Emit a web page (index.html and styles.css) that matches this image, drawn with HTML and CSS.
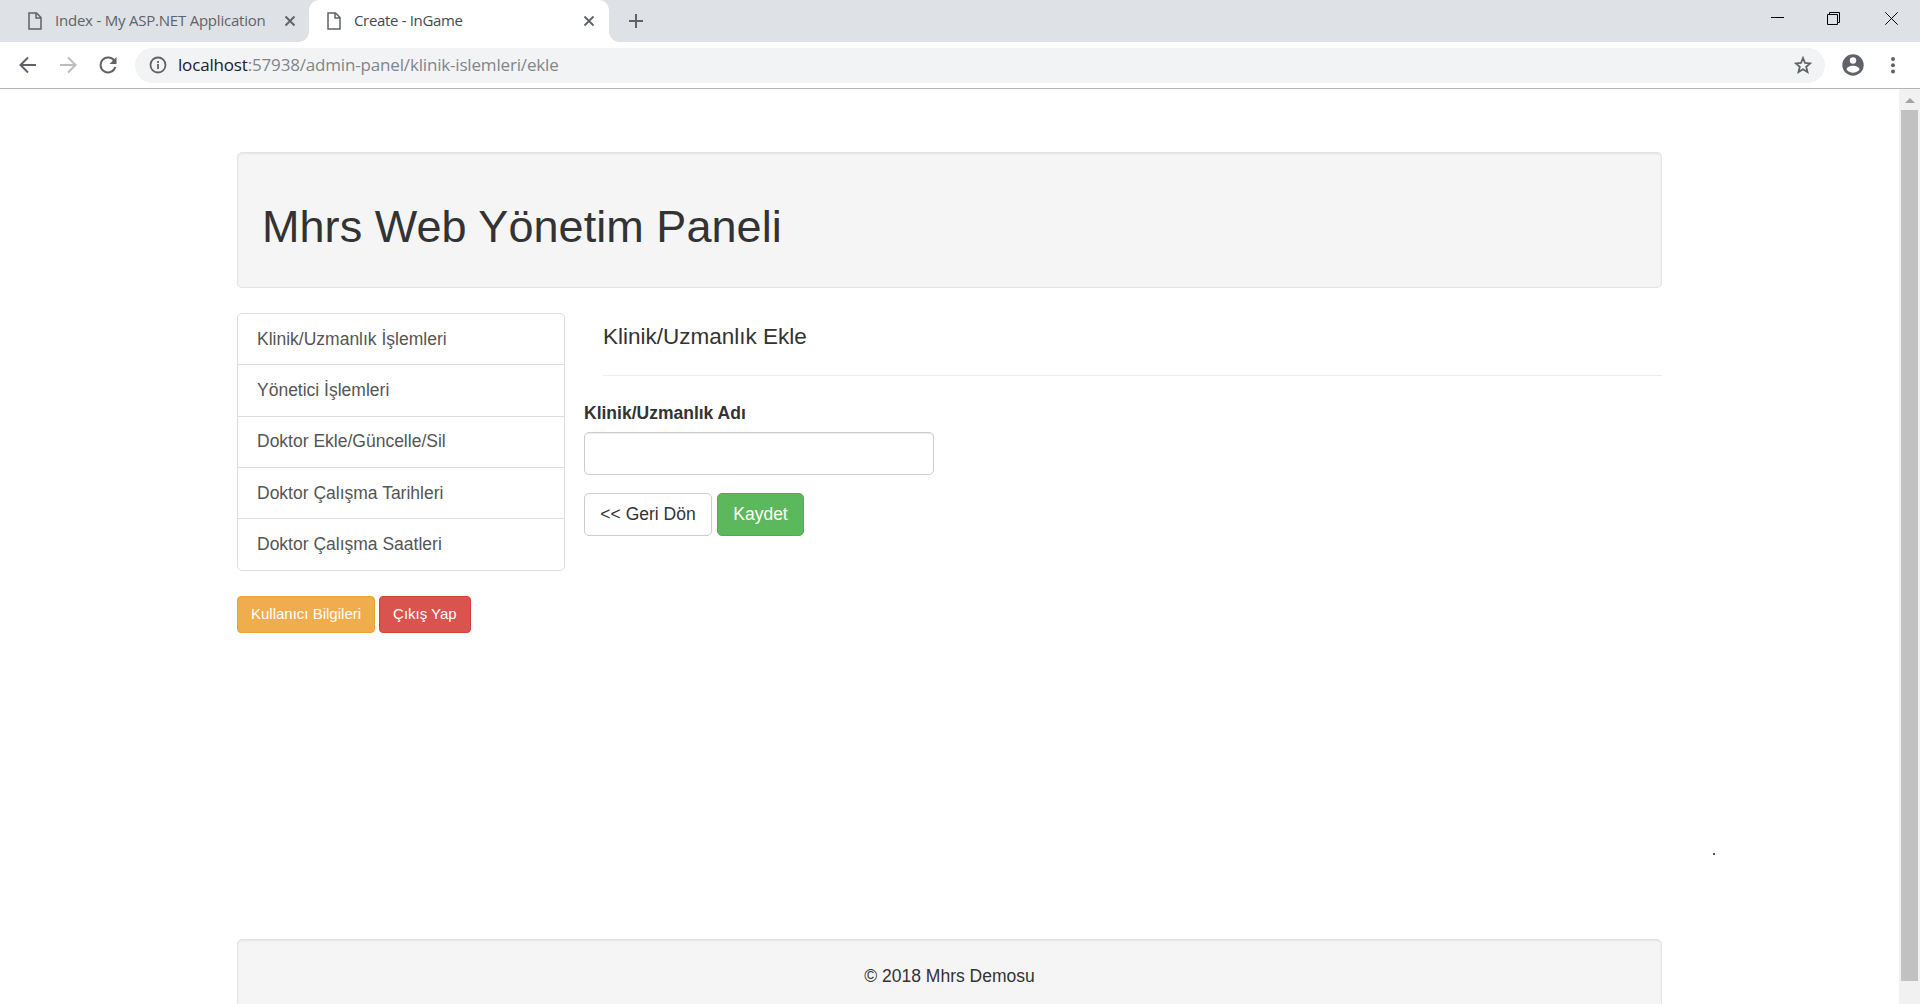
FILE: index.html
```html
<!DOCTYPE html>
<html lang="tr">
<head>
<meta charset="utf-8">
<title>Create - InGame</title>
<link rel="stylesheet" href="styles.css">
</head>
<body>
<div class="window">
  <header class="tabs">
    <div class="tab">
      <svg class="page-icon" width="14" height="18" viewBox="0 0 14 18"><path d="M1 1h7.500l4.500 4.500V17H1zM8 1v5h5"/></svg>
      <span class="tab-title title-index">Index - My ASP.NET Application</span>
      <svg class="tab-close" width="12" height="12" viewBox="0 0 12 12"><path d="M1.500 1.500l9 9M10.500 1.500l-9 9"/></svg>
    </div>
    <div class="tab active">
      <svg class="page-icon" width="14" height="18" viewBox="0 0 14 18"><path d="M1 1h7.500l4.500 4.500V17H1zM8 1v5h5"/></svg>
      <span class="tab-title title-create">Create - InGame</span>
      <svg class="tab-close" width="12" height="12" viewBox="0 0 12 12"><path d="M1.500 1.500l9 9M10.500 1.500l-9 9"/></svg>
    </div>
    <svg class="new-tab" width="16" height="16" viewBox="0 0 16 16"><path d="M8 1v14M1 8h14"/></svg>
    <div class="controls">
      <svg width="13" height="13" viewBox="0 0 13 13"><path d="M0 5.500h13"/></svg>
      <svg class="restore" width="13" height="13" viewBox="0 0 13 13"><path d="M.5 2.500h10v10h-10zM2.500 2.500v-2h10v10h-2"/></svg>
      <svg width="13" height="13" viewBox="0 0 13 13"><path d="M.3.3l12.400 12.400M12.700.3L.3 12.700"/></svg>
    </div>
  </header>
  <nav class="toolbar">
    <svg class="nav-icon" width="18" height="18" viewBox="0 0 18 18"><path d="M17 9H2M9 1.500L1.500 9 9 16.500"/></svg>
    <svg class="nav-icon disabled" width="18" height="18" viewBox="0 0 18 18"><path d="M1 9h15M9 1.500L16.500 9 9 16.500"/></svg>
    <svg class="nav-icon" width="18" height="18" viewBox="0 0 18 18"><path d="M15.600 5.200A7.500 7.500 0 1 0 16.300 11"/><path class="solid" d="M17.500 1v7h-7z"/></svg>
    <div class="address">
      <svg class="info" width="18" height="18" viewBox="0 0 18 18"><circle cx="9" cy="9" r="7.500"/><path d="M9 8v5M9 5v2"/></svg>
      <span class="url"><b>localhost</b>:57938/admin-panel/klinik-islemleri/ekle</span>
      <svg class="star" width="18" height="18" viewBox="0 0 18 18"><path d="M9 2l2 5 5.200.4-4 3.400 1.300 5.200L9 13.200 4.500 16l1.300-5.200-4-3.400L7 7z"/></svg>
    </div>
    <svg class="avatar" width="22" height="22" viewBox="0 0 22 22"><circle cx="11" cy="11" r="10.700"/><circle class="cut" cx="11" cy="6.500" r="3.200"/><path class="cut" d="M4.500 15.500c1-5 12-5 13 0-3 4.200-10 4.200-13 0z"/></svg>
    <svg class="dots" width="4" height="18" viewBox="0 0 4 18"><circle cx="2" cy="3" r="2"/><circle cx="2" cy="9.200" r="2"/><circle cx="2" cy="15.400" r="2"/></svg>
  </nav>
  <div class="viewport">
    <main class="container">
      <div class="well banner"><h1>Mhrs Web Yönetim Paneli</h1></div>
      <div class="columns">
        <aside>
          <ul class="list">
            <li>Klinik/Uzmanlık İşlemleri</li>
            <li>Yönetici İşlemleri</li>
            <li>Doktor Ekle/Güncelle/Sil</li>
            <li>Doktor Çalışma Tarihleri</li>
            <li>Doktor Çalışma Saatleri</li>
          </ul>
          <div class="actions small">
            <button class="btn warning">Kullanıcı Bilgileri</button>
            <button class="btn danger">Çıkış Yap</button>
          </div>
        </aside>
        <section>
          <h4>Klinik/Uzmanlık Ekle</h4>
          <label for="name">Klinik/Uzmanlık Adı</label>
          <input id="name" type="text">
          <div class="actions">
            <button class="btn plain">&lt;&lt; Geri Dön</button>
            <button class="btn success">Kaydet</button>
          </div>
        </section>
      </div>
      <footer class="well footer">© 2018 Mhrs Demosu</footer>
    </main>
    <div class="scrollbar">
      <svg width="10" height="5" viewBox="0 0 10 5"><path d="M0 5l5-5 5 5z"/></svg>
      <div class="thumb"></div>
    </div>
    <i class="speck"></i>
  </div>
</div>
</body>
</html>
```
FILE: styles.css
```css
* { box-sizing: border-box; }
html, body { margin: 0; height: 100%; overflow: hidden; background: #fff; }
body { font: 17.5px/25px "Liberation Sans", Arial, sans-serif; color: #333; }
svg { display: block; flex: none; fill: none; stroke: #5f6368; }
.window { width: 1920px; height: 1004px; display: flex; flex-direction: column; }
.tabs { height: 42px; flex: none; display: flex; background: #dee1e6; }
.tab { width: 309px; display: flex; align-items: center; padding: 0 13px 0 28px; font: 15px/20px "Open Sans", "Noto Sans", sans-serif; color: #5f6368; }
.tab.active { position: relative; width: 300px; padding: 0 14px 0 18px; background: #fff; border-radius: 10px 10px 0 0; color: #45494d; }
.tab.active::before, .tab.active::after { content: ""; position: absolute; bottom: 0; width: 10px; height: 10px; }
.tab.active::before { left: -10px; background: radial-gradient(circle at 0 0, transparent 9.500px, #fff 10px); }
.tab.active::after { right: -10px; background: radial-gradient(circle at 100% 0, transparent 9.500px, #fff 10px); }
.page-icon { stroke-width: 1.500; }
.tab-title { flex: 1; margin-left: 13px; padding-bottom: 2px; white-space: nowrap; }
.title-index { letter-spacing: -.22px; }
.title-create { letter-spacing: -.33px; }
.tab-close { stroke-width: 1.900; }
.new-tab { margin: 13px 0 0 19px; stroke-width: 2; }
.controls { display: flex; gap: 43px; margin: 12px 22px 0 auto; }
.controls svg { stroke: #000; }
.controls .restore { margin-right: 2px; }
.toolbar { height: 47px; flex: none; display: flex; align-items: center; padding: 0 25px 0 19px; border-bottom: 1px solid #b2b4b6; }
.nav-icon { margin-right: 22px; stroke-width: 2; }
.nav-icon.disabled { stroke: #babcbe; }
.nav-icon .solid { fill: #5f6368; stroke: none; }
.address { flex: 1; height: 35px; margin-left: -4px; padding: 0 13px 0 14px; display: flex; align-items: center; background: #f1f3f4; border-radius: 18px; }
.info, .star { stroke-width: 1.800; }
.url { flex: 1; margin-left: 11px; padding-bottom: 1px; font: 17px/24px "Open Sans", "Noto Sans", sans-serif; letter-spacing: -.17px; color: #80868b; }
.url b { font-weight: 400; color: #202124; }
.avatar { margin-left: 17px; fill: #5f6368; stroke: none; }
.avatar .cut { fill: #fff; }
.dots { margin-left: 27px; fill: #5f6368; stroke: none; }
.viewport { flex: 1; min-height: 0; display: flex; position: relative; overflow: hidden; }
.container { width: 1425px; margin-left: 237px; padding-top: 63px; }
.well { background: #f5f5f5; border: 1px solid #e3e3e3; border-radius: 5px; box-shadow: inset 0 1px 2px rgba(0, 0, 0, .07); }
.banner { height: 136px; padding: 49px 24px 0; }
h1 { margin: 0; font-size: 45px; line-height: 50px; font-weight: 400; letter-spacing: .05px; }
.columns { display: flex; gap: 19px; height: 651px; padding-top: 25px; }
aside { width: 328px; }
.list { list-style: none; margin: 0; padding: 0; border: 1px solid #ddd; border-radius: 5px; }
.list li { height: 51.250px; padding: 12.500px 19px; color: #555; border-bottom: 1px solid #ddd; }
.list li:nth-child(4) { padding-top: 13px; }
.list li:last-child { border: 0; }
.actions { display: flex; gap: 5px; }
.small { gap: 4px; margin-top: 25px; }
.btn { height: 43px; padding: 0 15px; border: 1px solid; border-radius: 5px; font: inherit; color: #fff; white-space: nowrap; }
.small .btn { height: 37px; padding: 0 13px 2px; font-size: 15px; border-radius: 4px; }
.warning { background: #f0ad4e; border-color: #eea236; }
.danger { background: #d9534f; border-color: #d43f3a; }
.success { width: 87px; background: #5cb85c; border-color: #4cae4c; }
.plain { width: 128px; background: #fff; border-color: #ccc; color: #333; }
section { flex: 1; }
h4 { margin: 0 0 25px 19px; height: 63px; padding-top: 11px; font-size: 22.500px; line-height: 25px; font-weight: 400; border-bottom: 1px solid #eee; }
label { display: block; margin-bottom: 6px; font-weight: 700; }
input { display: block; width: 350px; height: 43px; margin-bottom: 18px; border: 1px solid #ccc; border-radius: 5px; box-shadow: inset 0 1px 1px rgba(0, 0, 0, .075); }
.footer { height: 100px; padding-top: 24px; text-align: center; }
.scrollbar { width: 21px; margin-left: auto; background: #f1f1f1; padding: 9px 2px 0; }
.scrollbar svg { margin: 0 auto 7px; fill: #a3a3a3; stroke: none; }
.thumb { height: 871px; background: #c1c1c1; }
.speck { position: absolute; left: 1713px; top: 764px; width: 2px; height: 2px; background: #555; }
```
